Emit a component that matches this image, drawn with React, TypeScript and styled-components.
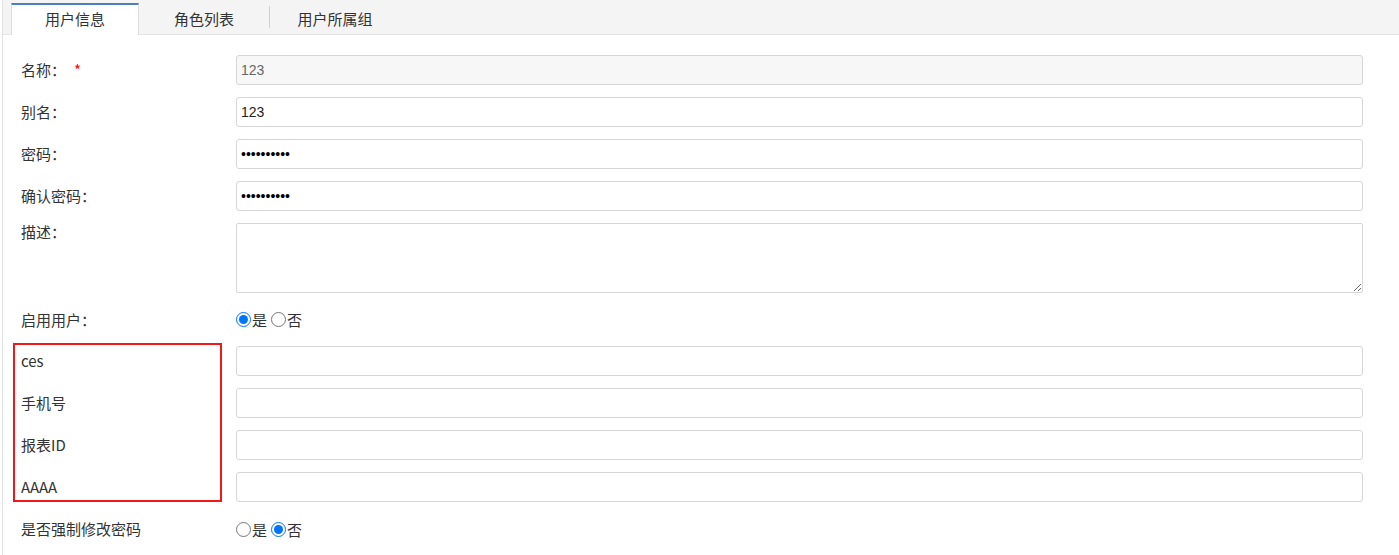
import React from "react";
import styled, { createGlobalStyle } from "styled-components";

const GlobalStyle = createGlobalStyle`
  html, body { margin: 0; padding: 0; background: #fff; }
  body {
    font-family: "Noto Sans CJK SC", "Liberation Sans", sans-serif;
    font-size: 15px;
    color: #333;
  }
  * { box-sizing: border-box; }
`;

const Page = styled.div`
  margin-left: 2px;
  border-left: 1px solid #e2e2e2;
  min-height: 555px;
`;

const TabBar = styled.div`
  display: flex;
  align-items: flex-start;
  height: 35px;
  padding-left: 8px;
  background: #f4f4f4;
  border-bottom: 1px solid #e4e4e4;
`;

const Tab = styled.div<{ $active?: boolean }>`
  width: ${(p) => (p.$active ? "128px" : "130px")};
  height: ${(p) => (p.$active ? "32px" : "31px")};
  margin-top: 3px;
  padding-bottom: 3px;
  display: flex;
  align-items: center;
  justify-content: center;
  font-size: 15px;
  color: #333;
  background: ${(p) => (p.$active ? "#fff" : "transparent")};
  border-top: 2px solid ${(p) => (p.$active ? "#4a7fc0" : "transparent")};
  border-left: 1px solid ${(p) => (p.$active ? "#dedede" : "transparent")};
  border-right: 1px solid ${(p) => (p.$active ? "#dedede" : "transparent")};
  cursor: pointer;
`;

const TabDivider = styled.div`
  width: 1px;
  height: 22px;
  margin-top: 6px;
  background: #d0d0d0;
`;

const Form = styled.div`
  padding: 20px 36px 0 18px;
  display: flex;
  flex-direction: column;
  gap: 12px;
`;

const Row = styled.div<{ $top?: boolean; $h?: number }>`
  display: flex;
  align-items: ${(p) => (p.$top ? "flex-start" : "center")};
  height: ${(p) => p.$h ?? 30}px;
`;

const Label = styled.div<{ $top?: boolean }>`
  width: 215px;
  flex: none;
  line-height: ${(p) => (p.$top ? "18px" : "28px")};
  font-size: 15px;
  color: #333;
  white-space: nowrap;
`;

const Required = styled.span`
  color: #f00;
  margin-left: 8px;
`;

const TextInput = styled.input`
  flex: 1;
  height: 30px;
  padding: 0 4px;
  border: 1px solid #d6d6d6;
  border-radius: 3px;
  font-family: "Liberation Sans", Arial, sans-serif;
  font-size: 14px;
  color: #222;
  background: #fff;
  outline: none;
  &:disabled {
    background: #f7f7f7;
    color: #666;
  }
`;

const PasswordInput = styled(TextInput)`
  font-size: 14px;
  color: #000;
`;

const TextArea = styled.textarea`
  flex: 1;
  height: 70px;
  padding: 4px;
  border: 1px solid #d6d6d6;
  border-radius: 2px;
  font-family: "Liberation Sans", Arial, sans-serif;
  font-size: 14px;
  outline: none;
  resize: both;
`;

const RadioGroup = styled.div`
  display: flex;
  align-items: center;
  gap: 4px;
`;

const RadioLabel = styled.label`
  display: inline-flex;
  align-items: center;
  gap: 1px;
  font-size: 15px;
  color: #333;
  cursor: pointer;
`;

const Radio = styled.input`
  width: 15px;
  height: 15px;
  margin: 0;
`;

const CustomGroup = styled.div`
  position: relative;
  display: flex;
  flex-direction: column;
  gap: 12px;
`;

const Highlight = styled.div`
  position: absolute;
  left: -8px;
  top: -3px;
  width: 209px;
  bottom: 0;
  border: 2px solid #f21818;
  pointer-events: none;
`;

const customFields = ["ces", "手机号", "报表ID", "AAAA"];

export default function App() {
  return (
    <>
      <GlobalStyle />
      <Page>
        <TabBar>
          <Tab $active>用户信息</Tab>
          <Tab>角色列表</Tab>
          <TabDivider />
          <Tab>用户所属组</Tab>
        </TabBar>
        <Form>
          <Row>
            <Label>
              名称：<Required>*</Required>
            </Label>
            <TextInput disabled defaultValue="123" />
          </Row>
          <Row>
            <Label>别名：</Label>
            <TextInput defaultValue="123" />
          </Row>
          <Row>
            <Label>密码：</Label>
            <PasswordInput type="password" defaultValue="1234567890" />
          </Row>
          <Row>
            <Label>确认密码：</Label>
            <PasswordInput type="password" defaultValue="1234567890" />
          </Row>
          <Row $top $h={70}>
            <Label $top>描述：</Label>
            <TextArea />
          </Row>
          <Row $h={29}>
            <Label>启用用户：</Label>
            <RadioGroup>
              <RadioLabel>
                <Radio type="radio" name="enable" defaultChecked />是
              </RadioLabel>
              <RadioLabel>
                <Radio type="radio" name="enable" />否
              </RadioLabel>
            </RadioGroup>
          </Row>
          <CustomGroup>
            <Highlight />
            {customFields.map((f) => (
              <Row key={f}>
                <Label>{f}</Label>
                <TextInput />
              </Row>
            ))}
          </CustomGroup>
          <Row>
            <Label>是否强制修改密码</Label>
            <RadioGroup>
              <RadioLabel>
                <Radio type="radio" name="force" />是
              </RadioLabel>
              <RadioLabel>
                <Radio type="radio" name="force" defaultChecked />否
              </RadioLabel>
            </RadioGroup>
          </Row>
        </Form>
      </Page>
    </>
  );
}
